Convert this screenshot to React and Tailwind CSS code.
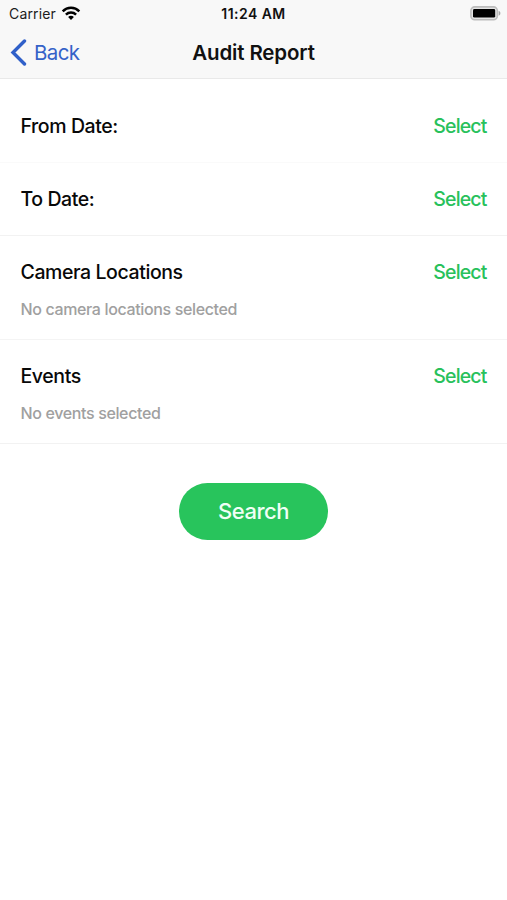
function Wifi() {
  return (
    <svg width="20" height="15" viewBox="0 0 20 15" fill="none" stroke="#000" strokeWidth="2.5">
      <path d="M1.7 5.3C6.3 0.7 13.7 0.7 18.3 5.3" />
      <path d="M4.9 8.7C7.8 5.9 12.2 5.9 15.1 8.7" />
      <path d="M10 13.9L7.1 11C8.7 9.4 11.3 9.4 12.9 11Z" fill="#000" stroke="none" />
    </svg>
  );
}

function Battery() {
  return (
    <svg width="31" height="15" viewBox="0 0 31 15">
      <rect x="0.9" y="0.9" width="26.4" height="12.8" rx="3.8" fill="#e4e4e4" stroke="#bcbcbc" strokeWidth="1.6" />
      <rect x="3" y="3" width="22.2" height="8.6" rx="1.4" fill="#000" />
      <path d="M28.6 4.8C31 5.6 31 9 28.6 9.8Z" fill="#a5a5a5" />
    </svg>
  );
}

function Row({ label, note, className }) {
  return (
    <section className={`px-[20.5px] ${className}`}>
      <div className="flex h-[26px] items-center justify-between text-[19.5px] font-medium leading-[26px]">
        <span className="tracking-[-0.41px] text-[#080808]">{label}</span>
        <button className="tracking-[-0.85px] text-[#28c15b]">Select</button>
      </div>
      {note && <p className="mt-[13px] text-[16px] leading-[22px] font-medium tracking-[-0.36px] text-[#a0a0a0]">{note}</p>}
    </section>
  );
}

export default function App() {
  return (
    <main className="h-[900px] w-[507px] overflow-hidden bg-white font-['Inter','Liberation_Sans',sans-serif]">
      <header className="h-[79px] border-b border-[#e9e9e9] bg-[#f8f8f8]">
        <div className="grid h-[27px] grid-cols-3 items-center text-[14px] leading-[27px]">
          <div className="flex items-center gap-[5px] pl-[9px] text-[#1c1c1c]">
            <span className="tracking-[0.15px]">Carrier</span>
            <Wifi />
          </div>
          <div className="text-center font-semibold tracking-[0.45px] text-[#111]">11:24 AM</div>
          <div className="flex justify-end pr-[6px]">
            <Battery />
          </div>
        </div>
        <div className="grid h-[51px] grid-cols-3 items-center text-[20.5px] leading-[51px]">
          <div className="flex items-center gap-[7px] pl-[10px] text-[#3562c8]">
            <svg width="17" height="27" viewBox="0 0 17 27" fill="none" stroke="#3060c9" strokeWidth="3.4" strokeLinecap="round">
              <path d="M14.5 2L3 13.5L14.5 25" />
            </svg>
            <span className="tracking-[-0.6px]">Back</span>
          </div>
          <h1 className="text-center font-semibold tracking-[-0.15px] whitespace-nowrap text-[#111]">Audit Report</h1>
        </div>
      </header>
      <Row label="From Date:" className="h-[84px] border-b border-[#fafafa] pt-[34px]" />
      <Row label="To Date:" className="h-[73px] border-b border-[#f2f2f2] pt-[23px]" />
      <Row label="Camera Locations" note="No camera locations selected" className="h-[104px] border-b border-[#f4f4f4] pt-[23px]" />
      <Row label="Events" note="No events selected" className="h-[104px] border-b border-[#f2f2f2] pt-[23px]" />
      <div className="flex justify-center pt-[39px]">
        <button className="h-[57px] w-[149px] rounded-full bg-[#28c45c] text-[22px] font-medium tracking-[-0.5px] text-[#f0fff5]">
          Search
        </button>
      </div>
    </main>
  );
}
